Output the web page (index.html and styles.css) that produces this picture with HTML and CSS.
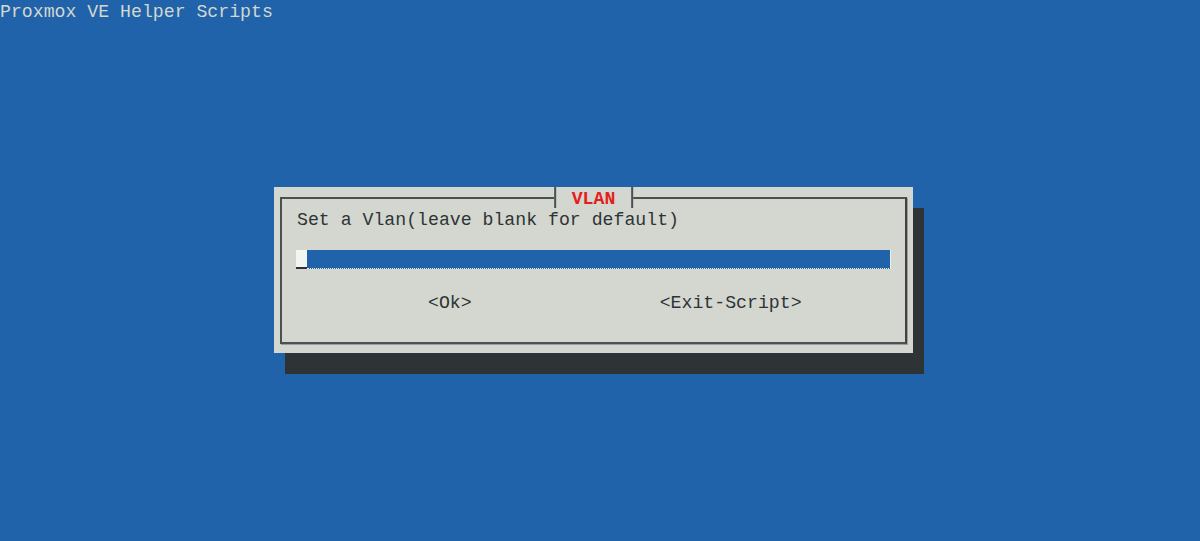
FILE: index.html
```html
<!DOCTYPE html>
<html>
<head>
<meta charset="utf-8">
<title>Proxmox VE Helper Scripts</title>
<link rel="stylesheet" href="styles.css">
</head>
<body>
<div class="term">
  <div class="backtitle">Proxmox VE Helper Scripts</div>
  <div class="dialog">
    <div class="frame">
      <div class="title"><span class="title-text">VLAN</span></div>
      <div class="label">Set a Vlan(leave blank for default)</div>
      <div class="input"><span class="cursor"></span><span class="field"></span></div>
      <div class="buttons">
        <span class="btn">&lt;Ok&gt;</span>
        <span class="btn">&lt;Exit-Script&gt;</span>
      </div>
    </div>
  </div>
</div>
</body>
</html>
```
FILE: styles.css
```css
html, body {
  margin: 0;
  padding: 0;
  background: #2063aa;
}
.term {
  width: 1200px;
  height: 541px;
  overflow: hidden;
  font-family: "Liberation Mono", "DejaVu Sans Mono", monospace;
  font-size: 18.2px;
  line-height: 20.8px;
  color: #d3d7cf;
  display: flex;
  flex-direction: column;
  align-items: flex-start;
}
.backtitle {
  height: 20.8px;
  padding-top: 2px;
  box-sizing: border-box;
  white-space: pre;
}
.dialog {
  margin-top: 166.2px;
  margin-left: 274px;
  width: 639px;
  height: 166px;
  box-sizing: border-box;
  background: #d3d7cf;
  padding: 10px 6px 9px 6px;
  box-shadow: 11px 21px 0 #2e3436;
  display: flex;
}
.frame {
  position: relative;
  flex: 1;
  border: 2px solid #4b5052;
  border-right-color: #3e4345;
  box-shadow: 1px 1px 0 #9a9e98;
  padding: 9px 0 0 15px;
  color: #2e3436;
  display: flex;
  flex-direction: column;
}
.title {
  position: absolute;
  top: -12px;
  left: 50%;
  transform: translateX(-50%);
  height: 20.8px;
  padding: 2px 16px 0 16px;
  box-sizing: border-box;
  background: #d3d7cf;
  border-left: 2px solid #4b5052;
  border-right: 2px solid #4b5052;
}
.title-text {
  color: #e2201c;
  font-weight: bold;
  line-height: 18.8px;
}
.label {
  height: 20.8px;
  padding-top: 2px;
  box-sizing: border-box;
  white-space: pre;
}
.input {
  margin-top: 20.8px;
  margin-left: -1px;
  height: 20.8px;
  display: flex;
  align-items: flex-start;
}
.cursor {
  width: 11px;
  height: 19px;
  background: #f4f5f1;
  border-bottom: 2px solid #2e3436;
  box-sizing: border-box;
}
.field {
  width: 584px;
  height: 19px;
  background: #2063aa;
  border-bottom: 1px dotted #eef0ea;
  border-right: 1px solid #eef0ea;
  box-sizing: border-box;
}
.buttons {
  margin-top: 20.8px;
  height: 20.8px;
  padding-top: 2px;
  box-sizing: border-box;
  display: flex;
  gap: 188px;
  padding-left: 131px;
  white-space: pre;
}
```
